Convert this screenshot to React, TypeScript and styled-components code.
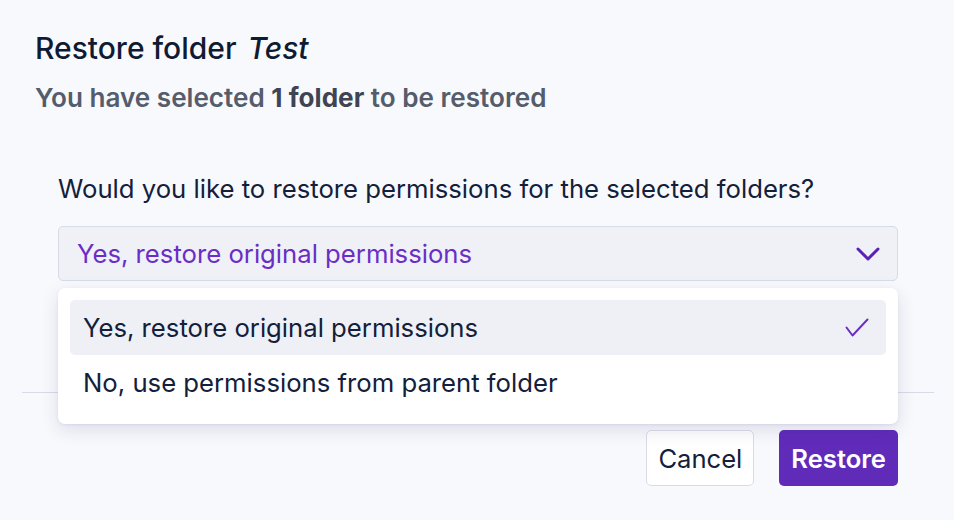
import React, { useState } from 'react';
import styled, { createGlobalStyle } from 'styled-components';

const GlobalStyle = createGlobalStyle`
  html, body {
    margin: 0;
    padding: 0;
    background: #f8f9fc;
    font-family: Inter, "Noto Sans", "Liberation Sans", sans-serif;
  }
`;

const Dialog = styled.div`
  width: 954px;
  height: 520px;
  box-sizing: border-box;
  background: #f8f9fc;
  display: flex;
  flex-direction: column;
  overflow: hidden;
`;

const Header = styled.div`
  padding: 31px 35px 0 35px;
  display: flex;
  flex-direction: column;
  gap: 16px;
`;

const Title = styled.h2`
  margin: 0;
  font-size: 30px;
  line-height: 35.75px;
  font-weight: 500;
  color: #101b33;

  em {
    font-style: italic;
    margin-left: 3px;
  }
`;

const Subtitle = styled.p`
  margin: 0;
  font-size: 26.1px;
  line-height: 30.8px;
  font-weight: 600;
  color: #555c6b;

  strong {
    font-weight: 700;
    color: #3e4454;
  }
`;

const Body = styled.div`
  padding: 60px 56px 0 58px;
  display: flex;
  flex-direction: column;
`;

const Label = styled.label`
  font-size: 25.7px;
  line-height: 30.8px;
  color: #13203b;
  margin-bottom: 22px;
`;

const SelectWrap = styled.div`
  position: relative;
  margin-bottom: 111px;
`;

const Trigger = styled.button`
  width: 100%;
  height: 55px;
  box-sizing: border-box;
  display: flex;
  align-items: center;
  justify-content: space-between;
  padding: 0 17px 0 18px;
  background: #eff1f6;
  border: 1.5px solid #d5dbe7;
  border-radius: 5px;
  font-family: inherit;
  font-size: 25.7px;
  color: #6a2ec6;
  cursor: pointer;
  text-align: left;
`;

const Menu = styled.ul`
  position: absolute;
  left: 0;
  right: 0;
  top: calc(100% + 7px);
  margin: 0;
  padding: 12px 12px 14px 12px;
  list-style: none;
  background: #ffffff;
  border-radius: 7px;
  box-shadow: 0 6px 18px rgba(40, 40, 100, 0.13), 0 1px 3px rgba(40, 40, 100, 0.08);
  z-index: 10;
`;

const Option = styled.li<{ $selected?: boolean }>`
  height: 55px;
  display: flex;
  align-items: center;
  justify-content: space-between;
  padding: 0 17px 0 13px;
  border-radius: 5px;
  font-size: 25.7px;
  color: #13203b;
  background: ${(p) => (p.$selected ? '#eef0f6' : 'transparent')};
  cursor: pointer;
`;

const Divider = styled.hr`
  margin: 0 20px 0 22px;
  border: none;
  border-top: 1.5px solid #d7dbe7;
`;

const Footer = styled.div`
  display: flex;
  justify-content: flex-end;
  gap: 25px;
  padding: 37px 56px 0 0;
`;

const Button = styled.button<{ $primary?: boolean }>`
  height: 56px;
  box-sizing: border-box;
  padding: 0 ${(p) => (p.$primary ? 12 : 11)}px;
  border-radius: 5px;
  font-family: inherit;
  font-size: 25.6px;
  font-weight: ${(p) => (p.$primary ? 600 : 400)};
  color: ${(p) => (p.$primary ? '#ffffff' : '#13203b')};
  background: ${(p) => (p.$primary ? '#602bb9' : '#ffffff')};
  border: ${(p) => (p.$primary ? 'none' : '1.5px solid #d8dce8')};
  cursor: pointer;
`;

const options = ['Yes, restore original permissions', 'No, use permissions from parent folder'];

const ChevronIcon = () => (
  <svg width="24" height="14" viewBox="0 0 24 14" fill="none">
    <path d="M2 2 L12 12 L22 2" stroke="#5b22b8" strokeWidth="3" strokeLinecap="round" strokeLinejoin="round" />
  </svg>
);

const CheckIcon = () => (
  <svg width="24" height="20" viewBox="0 0 24 20" fill="none">
    <path d="M1.5 9.5 L7.5 17.5 L22.5 1.5" stroke="#6a2ec6" strokeWidth="2" strokeLinecap="round" strokeLinejoin="round" />
  </svg>
);

const App: React.FC = () => {
  const [selected, setSelected] = useState<string>(options[0]);
  const [open, setOpen] = useState<boolean>(true);

  return (
    <>
      <GlobalStyle />
      <Dialog>
        <Header>
          <Title>
            Restore folder <em>Test</em>
          </Title>
          <Subtitle>
            You have selected <strong>1 folder</strong> to be restored
          </Subtitle>
        </Header>
        <Body>
          <Label>Would you like to restore permissions for the selected folders?</Label>
          <SelectWrap>
            <Trigger onClick={() => setOpen(!open)}>
              {selected}
              <ChevronIcon />
            </Trigger>
            {open && (
              <Menu>
                {options.map((opt) => (
                  <Option
                    key={opt}
                    $selected={opt === selected}
                    onClick={() => {
                      setSelected(opt);
                      setOpen(false);
                    }}
                  >
                    {opt}
                    {opt === selected && <CheckIcon />}
                  </Option>
                ))}
              </Menu>
            )}
          </SelectWrap>
        </Body>
        <Divider />
        <Footer>
          <Button>Cancel</Button>
          <Button $primary>Restore</Button>
        </Footer>
      </Dialog>
    </>
  );
};

export default App;
